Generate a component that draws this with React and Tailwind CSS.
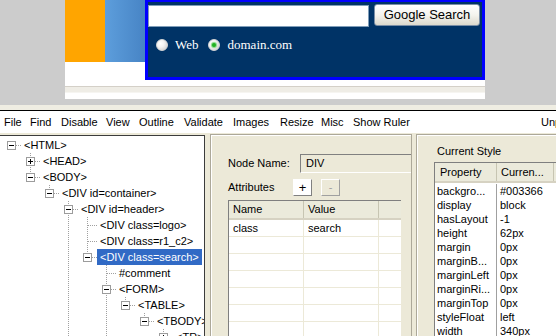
import React from "react";

const treeRows = [
  { n: 0, label: "<HTML>", box: "-", own: null, pass: [] },
  { n: 1, label: "<HEAD>", box: "+", own: "full", pass: [] },
  { n: 1, label: "<BODY>", box: "-", own: "top", pass: [] },
  { n: 2, label: "<DIV id=container>", box: "-", own: "top", pass: [] },
  { n: 3, label: "<DIV id=header>", box: "-", own: "full", pass: [] },
  { n: 4, label: "<DIV class=logo>", box: null, own: "full", pass: [3] },
  { n: 4, label: "<DIV class=r1_c2>", box: null, own: "full", pass: [3] },
  { n: 4, label: "<DIV class=search>", box: "-", own: "top", pass: [3], sel: true },
  { n: 5, label: "#comment", box: null, own: "full", pass: [3] },
  { n: 5, label: "<FORM>", box: "-", own: "full", pass: [3] },
  { n: 6, label: "<TABLE>", box: "-", own: "top", pass: [3, 5] },
  { n: 7, label: "<TBODY>", box: "-", own: "top", pass: [3, 5] },
  { n: 8, label: "<TR>", box: "+", own: "top", pass: [3, 5] },
];

const DOT = { stroke: "#a0a0a0", strokeWidth: 1, strokeDasharray: "1 1" };

function TreeRow({ n, label, box, own, pass, sel }) {
  const W = 21 + 19 * n;
  const cx = (c) => 11.5 + 19 * c;
  const hx = box ? 16 + 19 * n : 12 + 19 * n;
  return (
    <div className="flex h-[16px] items-center">
      <svg width={W} height={16} className="shrink-0 block">
        {pass.map((c) => (
          <line key={c} x1={cx(c)} x2={cx(c)} y1={0} y2={16} {...DOT} />
        ))}
        {own === "full" && <line x1={cx(n)} x2={cx(n)} y1={0} y2={16} {...DOT} />}
        {own === "top" && <line x1={cx(n)} x2={cx(n)} y1={0} y2={8} {...DOT} />}
        <line x1={hx} x2={W} y1={8.5} y2={8.5} {...DOT} />
        {box && (
          <g>
            <rect x={7.5 + 19 * n} y={4.5} width={8} height={8} fill="#ffffff" stroke="#9c9c9c" strokeWidth={1} />
            <line x1={9 + 19 * n} x2={14 + 19 * n} y1={8.5} y2={8.5} stroke="#000" strokeWidth={1} />
            {box === "+" && <line x1={11.5 + 19 * n} x2={11.5 + 19 * n} y1={6} y2={11} stroke="#000" strokeWidth={1} />}
          </g>
        )}
      </svg>
      <span
        className={
          "px-[3px] h-[16px] leading-[16px] whitespace-nowrap " +
          (sel ? "bg-[#316ac5] text-white" : "text-black")
        }
      >
        {label}
      </span>
    </div>
  );
}

function Radio({ checked }) {
  return (
    <div className="relative w-[12px] h-[12px] rounded-full border border-[#d8d8d8] bg-[radial-gradient(circle_at_35%_35%,#ffffff_0%,#f2f2f2_40%,#c4c4c4_100%)] flex items-center justify-center shrink-0">
      {checked && <div className="w-[4px] h-[4px] rounded-full bg-[#22b022] shadow-[0_0_1px_1px_#7ed87e]" />}
    </div>
  );
}

const menu = [
  ["File", "w-[26px]"],
  ["Find", "w-[31px]"],
  ["Disable", "w-[45px]"],
  ["View", "w-[33px]"],
  ["Outline", "w-[45px]"],
  ["Validate", "w-[49px]"],
  ["Images", "w-[47px]"],
  ["Resize", "w-[41px]"],
  ["Misc", "w-[32px]"],
  ["Show Ruler", "w-[70px]"],
];

const props = [
  ["backgro...", "#003366"],
  ["display", "block"],
  ["hasLayout", "-1"],
  ["height", "62px"],
  ["margin", "0px"],
  ["marginB...", "0px"],
  ["marginLeft", "0px"],
  ["marginRi...", "0px"],
  ["marginTop", "0px"],
  ["styleFloat", "left"],
  ["width", "340px"],
];

export default function App() {
  return (
    <div className="w-[556px] h-[336px] overflow-hidden bg-[#ece9d8] font-['Liberation_Sans',Arial,sans-serif] text-[11px] text-black">
      {/* Browser viewport */}
      <div className="h-[105px] bg-[#cccccc] pl-[65px]">
        <div className="w-[420px] h-[99px] bg-white flex flex-col">
          <div className="flex h-[86px]">
            <div className="w-[40px] h-[62px] bg-[#ffa500]" />
            <div className="w-[40px] h-[62px] bg-gradient-to-r from-[#5d9edc] to-[#4784c5]" />
            <div className="w-[340px] h-[80px] bg-[#003366] border-[3px] border-t-2 border-[#0000ff] flex flex-col">
              <div className="flex mt-[3px] items-start">
                <div className="w-[221px] h-[22px] bg-white border border-[#7f9db9]" />
                <div className="ml-[5px] -mt-[1px] w-[106px] h-[22px] rounded-[3px] border border-[#7a8ea6] bg-gradient-to-b from-white via-[#f4f3ee] to-[#dcd9cd] flex items-center justify-center text-[13px] text-black">
                  Google Search
                </div>
              </div>
              <div className="flex items-center h-[14px] mt-[11px] pl-[8px] font-['Liberation_Serif','Times_New_Roman',serif] text-[13px] text-white">
                <Radio />
                <span className="ml-[7px]">Web</span>
                <div className="ml-[9px]">
                  <Radio checked />
                </div>
                <span className="ml-[8px]">domain.com</span>
              </div>
            </div>
          </div>
          <div className="h-px bg-[#d4d0c8]" />
          <div className="h-[5px] bg-[#efede6]" />
          <div className="h-px bg-[#f6f5f1]" />
        </div>
      </div>
      <div className="h-[5px] bg-[#efede2]" />
      <div className="h-px bg-black" />
      {/* Menu */}
      <div className="h-[22px] bg-white flex items-center pl-[4px] whitespace-nowrap">
        {menu.map(([t, w]) => (
          <span key={t} className={w + " shrink-0"}>
            {t}
          </span>
        ))}
        <span className="ml-auto -mr-[30px] w-[45px] shrink-0">Unpin</span>
      </div>
      {/* Bottom */}
      <div className="flex h-[203px] items-start">
        {/* Tree */}
        <div className="mt-[2px] w-[205px] h-[201px] bg-white border-t border-r border-[#3c3c3c] pt-[1px] shrink-0 overflow-hidden">
          {treeRows.map((r, i) => (
            <TreeRow key={i} {...r} />
          ))}
        </div>
        {/* Middle panel */}
        <div className="ml-[5px] mt-[1px] w-[202px] h-[202px] border-t border-l border-r border-[#aca899] shrink-0 flex flex-col">
          <div className="border-t border-l border-white h-full flex flex-col pl-[16px]">
            <div className="flex items-center mt-[18px] h-[19px]">
              <span className="w-[72px]">Node Name:</span>
              <div className="flex-1 h-[19px] border-t border-l border-[#808080] border-b border-b-white bg-[#ece9d8] flex items-center pl-[5px]">
                DIV
              </div>
            </div>
            <div className="flex items-center mt-[6px] h-[17px]">
              <span className="w-[65px]">Attributes</span>
              <div className="w-[19px] h-[17px] border border-[#808080] border-t-white border-l-white bg-white flex items-center justify-center text-[13px] leading-none">
                +
              </div>
              <div className="ml-[9px] w-[19px] h-[17px] border border-[#a0a0a0] border-t-white border-l-white bg-[#ece9d8] flex items-center justify-center text-[#a0a0a0] leading-none">
                -
              </div>
            </div>
            <div className="mt-[4px] w-[173px] flex-1 border-t border-l border-[#7f7f7f] bg-white flex flex-col overflow-hidden">
              <div className="flex h-[19px] bg-[#ebeadb] border-b-2 border-[#d6d2c2] shrink-0">
                <div className="w-[75px] pl-[4px] flex items-center border-r border-[#c7c5b2]">Name</div>
                <div className="w-[75px] pl-[4px] flex items-center border-r border-[#c7c5b2]">Value</div>
                <div className="flex-1" />
              </div>
              {[["class", "search"], ["", ""], ["", ""], ["", ""], ["", ""], ["", ""], ["", ""]].map(([a, b], i) => (
                <div key={i} className="flex h-[17px] border-b border-[#ece9d8] shrink-0">
                  <div className="w-[75px] pl-[4px] flex items-center border-r border-[#ece9d8]">{a}</div>
                  <div className="w-[75px] pl-[4px] flex items-center border-r border-[#ece9d8]">{b}</div>
                  <div className="flex-1" />
                </div>
              ))}
            </div>
          </div>
        </div>
        {/* Right panel */}
        <div className="ml-[4px] mt-[1px] flex-1 h-[202px] border-t border-l border-[#aca899] flex flex-col">
          <div className="border-t border-l border-white h-full flex flex-col pl-[16px]">
            <div className="mt-[8px] h-[14px] leading-[14px] pl-[3px]">Current Style</div>
            <div className="mt-[4px] flex-1 border-t border-l border-[#7f7f7f] bg-white flex flex-col overflow-hidden">
              <div className="flex h-[20px] bg-[#ebeadb] border-b-2 border-[#d6d2c2] shrink-0 whitespace-nowrap">
                <div className="w-[62px] pl-[5px] flex items-center border-r border-[#c7c5b2] shrink-0">Property</div>
                <div className="w-[57px] pl-[4px] flex items-center border-r border-[#c7c5b2] shrink-0">Curren...</div>
                <div className="flex-1" />
              </div>
              <div className="h-[1px] shrink-0" />
              {props.map(([p, v]) => (
                <div key={p} className="flex h-[14px] shrink-0 whitespace-nowrap">
                  <div className="w-[62px] pl-[2px] flex items-center border-r border-[#a0a0a0] shrink-0">{p}</div>
                  <div className="w-[57px] pl-[3px] flex items-center shrink-0">{v}</div>
                </div>
              ))}
            </div>
          </div>
        </div>
      </div>
    </div>
  );
}
